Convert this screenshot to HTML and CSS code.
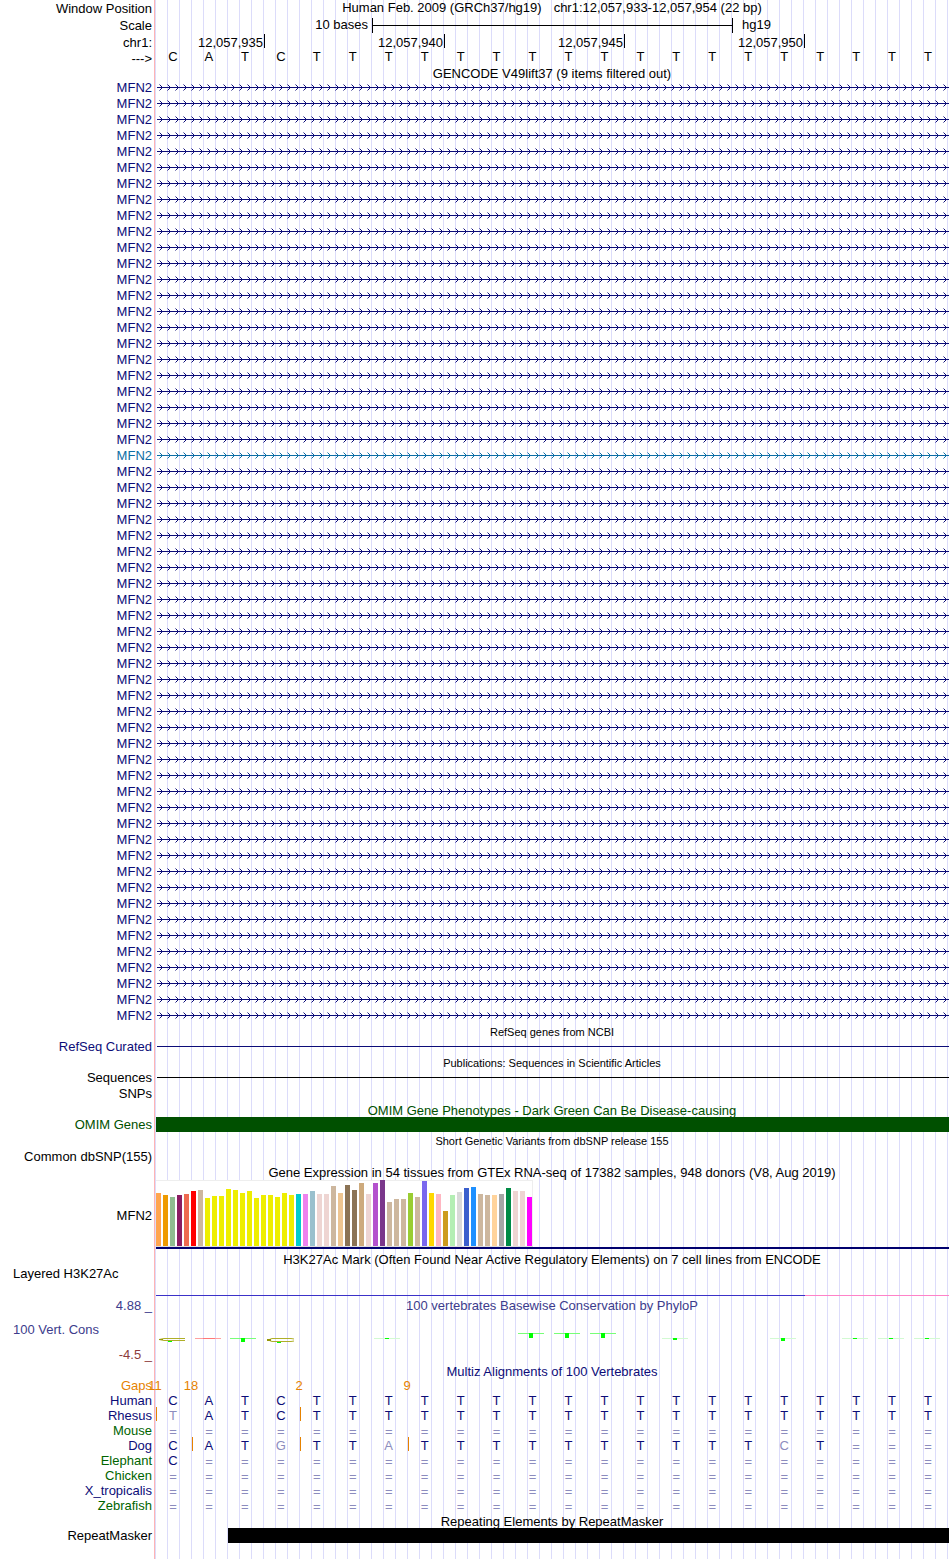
FILE: index.html
```html
<!DOCTYPE html>
<html lang="en">
<head>
    <meta charset="UTF-8">
    <meta name="viewport" content="width=device-width, initial-scale=1.0">
    <title>Human chr1:12,057,933-12,057,954</title>
    <link rel="stylesheet" href="styles.css">
</head>
<body>
    <!-- shared arrow patterns for the gene rows -->
    <svg class="defs" aria-hidden="true">
        <defs>
            <pattern id="arrows" width="8" height="16" patternUnits="userSpaceOnUse">
                <path d="M0 8.5H8M2.5 5.5L5.5 8.5L2.5 11.5" fill="none" stroke="#0c0c78"/>
            </pattern>
            <pattern id="arrows-alt" width="8" height="16" patternUnits="userSpaceOnUse">
                <path d="M0 8.5H8M2.5 5.5L5.5 8.5L2.5 11.5" fill="none" stroke="#0c6ea5"/>
            </pattern>
        </defs>
    </svg>
    <main class="browser">
        <div class="track">
            <div class="label">Window Position</div>
            <div class="position"><span>Human Feb. 2009 (GRCh37/hg19)</span><span>chr1:12,057,933-12,057,954 (22 bp)</span></div>
        </div>
        <div class="track scale-track">
            <div class="label">Scale</div>
            <div class="scale">
                <span class="scale-size">10 bases</span>
                <span class="scale-bar"></span>
                <span class="scale-db">hg19</span>
            </div>
        </div>
        <div class="track">
            <div class="label">chr1:</div>
            <div class="ruler">
                <span class="tick first">12,057,935</span>
                <span class="tick">12,057,940</span>
                <span class="tick">12,057,945</span>
                <span class="tick">12,057,950</span>
            </div>
        </div>
        <div class="track">
            <div class="label">---&gt;</div>
            <div class="bases sequence" data-seq="CATCTTTTTTTTTTTTTTTTTT"></div>
        </div>

        <div class="title gencode">GENCODE V49lift37 (9 items filtered out)</div>
        <div id="genes"></div>

        <div class="title small">RefSeq genes from NCBI</div>
        <div class="track short navy">
            <div class="label">RefSeq Curated</div>
            <div class="line"></div>
        </div>

        <div class="title small">Publications: Sequences in Scientific Articles</div>
        <div class="track short">
            <div class="label">Sequences</div>
            <div class="line"></div>
        </div>
        <div class="track">
            <div class="label">SNPs</div>
        </div>

        <div class="title low green">OMIM Gene Phenotypes - Dark Green Can Be Disease-causing</div>
        <div class="track short green">
            <div class="label">OMIM Genes</div>
            <div class="block"></div>
        </div>

        <div class="title small">Short Genetic Variants from dbSNP release 155</div>
        <div class="track">
            <div class="label">Common dbSNP(155)</div>
        </div>

        <div class="title">Gene Expression in 54 tissues from GTEx RNA-seq of 17382 samples, 948 donors (V8, Aug 2019)</div>
        <div class="track gtex">
            <div class="label">MFN2</div>
            <div class="expression"><div class="bars" id="bars"></div></div>
        </div>

        <div class="title tall">H3K27Ac Mark (Often Found Near Active Regulatory Elements) on 7 cell lines from ENCODE</div>
        <div class="track h3k">
            <div class="label left">Layered H3K27Ac</div>
            <div class="signal"></div>
        </div>

        <div class="track short cons-head">
            <div class="label">4.88 _</div>
            <div class="heading">100 vertebrates Basewise Conservation by PhyloP</div>
        </div>
        <div class="track cons">
            <div class="cons-labels">
                <div class="label left">100 Vert. Cons</div>
                <div class="label minimum">-4.5 _</div>
            </div>
            <svg class="phylop" viewBox="0 0 792 51" preserveAspectRatio="none" role="img" aria-label="PhyloP scores">
                <g fill="none" stroke="#afaf28">
                    <path d="M30 25.5H9L4 26.5L9 27.5H30"/>
                    <path d="M139 26L136 25.5H117L113 27L117 28.5H136L139 28"/>
                </g>
                <path d="M4 26h4v1H4zM112 26h4v2h-4z" fill="#96960a"/>
                <path d="M40 25h26v1H40z" fill="#ffa0a0"/>
                <path d="M48 25h12v1H48z" fill="#ff7878"/>
                <path d="M75 25h26v1H75zM363 20h26v1h-26zM399 20h26v1h-26zM435 20h26v1h-26z" fill="#78ff78"/>
                <path d="M219 25h26v1h-26zM507 25h26v1h-26zM615 25h26v1h-26zM687 25h26v1h-26zM723 25h26v1h-26zM759 25h26v1h-26z" fill="#d2fad2"/>
                <path d="M13 28h4v1h-4zM86 25h4v4h-4zM122 29h4v1h-4zM230 25h4v1h-4zM374 20h4v5h-4zM410 20h4v5h-4zM446 20h4v5h-4zM518 25h4v2h-4zM626 25h4v3h-4zM698 25h4v1h-4zM734 25h4v1h-4zM770 25h4v1h-4z" fill="#00ff00"/>
            </svg>
        </div>

        <div class="title short navy">Multiz Alignments of 100 Vertebrates</div>
        <div class="track short species gaps">
            <div class="label">Gaps</div>
            <div class="bases">
                <span>11</span><span>18</span><span></span><span></span><span>2</span><span></span><span></span><span>9</span>
            </div>
        </div>
        <div id="alignments"></div>

        <div class="title repeat">Repeating Elements by RepeatMasker</div>
        <div class="track short">
            <div class="label">RepeatMasker</div>
            <div class="repeats"><div class="block"></div></div>
        </div>
    </main>

    <script>
        const GENE_ROWS = 59;
        const ALT_ROW = 23;

        // color and height of each tissue, in GTEx order
        const tissues = [
            ["#ffa54f", 53], ["#ee9a00", 51], ["#8fbc8f", 49], ["#8b1c62", 51], ["#ee6a50", 52], ["#ff0000", 55],
            ["#cdb79e", 56], ["#eeee00", 48], ["#eeee00", 50], ["#eeee00", 50], ["#eeee00", 57], ["#eeee00", 56],
            ["#eeee00", 53], ["#eeee00", 55], ["#eeee00", 48], ["#eeee00", 51], ["#eeee00", 51], ["#eeee00", 49],
            ["#eeee00", 53], ["#eeee00", 51], ["#00cdcd", 52], ["#ee82ee", 52], ["#9ac0cd", 55], ["#eed5d2", 52],
            ["#eed5d2", 52], ["#cdb79e", 60], ["#eec591", 53], ["#8b7355", 61], ["#8b7355", 56], ["#cdaa7d", 63],
            ["#eed5d2", 52], ["#b452cd", 63], ["#7a378b", 66], ["#cdb79e", 44], ["#cdb79e", 47], ["#cdb79e", 47],
            ["#9acd32", 53], ["#cdb79e", 49], ["#7a67ee", 65], ["#ffd700", 53], ["#ffb6c1", 52], ["#cd9b1d", 35],
            ["#b4eeb4", 51], ["#d9d9d9", 54], ["#3a5fcd", 58], ["#1e90ff", 59], ["#cdb79e", 52], ["#cdb79e", 51],
            ["#ffd39b", 51], ["#a6a6a6", 52], ["#008b45", 58], ["#eed5d2", 55], ["#eed5d2", 55], ["#ff00ff", 49]
        ];

        // lower case = differs from human, "|" = insertion before the next base
        const species = [
            ["Human", "navy", "CATCTTTTTTTTTTTTTTTTTT"],
            ["Rhesus", "navy", "|tATC|TTTTTTTTTTTTTTTTTT"],
            ["Mouse", "forest", "======================"],
            ["Dog", "navy", "C|ATg|TTa|TTTTTTTTTTcT==="],
            ["Elephant", "forest", "C====================="],
            ["Chicken", "forest", "======================"],
            ["X_tropicalis", "navy", "======================"],
            ["Zebrafish", "forest", "======================"]
        ];

        function baseCells(seq) {
            let html = "";
            let gap = false;
            for (const c of seq) {
                if (c === "|") {
                    gap = true;
                    continue;
                }
                const classes = [];
                if (gap) classes.push("gap");
                if (c === "=") classes.push("unaligned");
                else if (c !== c.toUpperCase()) classes.push("mismatch");
                html += `<span class="${classes.join(" ")}">${c.toUpperCase()}</span>`;
                gap = false;
            }
            return html;
        }

        let genes = "";
        for (let i = 0; i < GENE_ROWS; i++) {
            const alt = i === ALT_ROW;
            genes += `<div class="track ${alt ? "teal" : "navy"}">
                <div class="label">MFN2</div>
                <svg class="gene"><rect width="100%" height="16" fill="url(#${alt ? "arrows-alt" : "arrows"})"/></svg>
            </div>`;
        }
        document.getElementById("genes").innerHTML = genes;

        document.getElementById("bars").innerHTML = tissues
            .map(([color, height]) => `<span style="height: ${height}px; background: ${color}"></span>`)
            .join("");

        document.getElementById("alignments").innerHTML = species
            .map(([name, color, seq]) => `<div class="track short species">
                <div class="label ${color}">${name}</div>
                <div class="bases aligned">${baseCells(seq)}</div>
            </div>`)
            .join("");

        document.querySelectorAll("[data-seq]").forEach(el => {
            el.innerHTML = baseCells(el.dataset.seq);
        });
    </script>
</body>
</html>
```
FILE: styles.css
```css
body {
    margin: 0;
    background: #fff;
    color: #000;
    font-family: "Liberation Sans", Arial, sans-serif;
    font-size: 13px;
    line-height: 16px;
}

.defs {
    position: absolute;
    width: 0;
    height: 0;
}

/* pink divider and light guide lines run behind every track */
.browser {
    margin-right: 1px;
    padding-bottom: 16px;
    background:
        linear-gradient(#ffb4b4, #ffb4b4) 154px 0 / 1px 100% no-repeat,
        linear-gradient(90deg, #fff 155px, transparent 155px),
        repeating-linear-gradient(90deg, transparent 0 11px, #dcdcfa 11px 12px);
}

.track {
    display: grid;
    grid-template-columns: 155px 1fr;
    grid-template-rows: 100%;
    height: 16px;
}

.label {
    padding-right: 3px;
    line-height: 18px;
    text-align: right;
    white-space: nowrap;
}

.label.left {
    padding-left: 13px;
    text-align: left;
}

.short,
.short .label {
    height: 15px;
    line-height: 15px;
}

.title {
    height: 16px;
    margin-left: 155px;
    line-height: 18px;
    text-align: center;
    white-space: nowrap;
}

.title.small {
    font-size: 11px;
}

.title.low {
    line-height: 20px;
}

.title.gencode {
    height: 13px;
    line-height: 15px;
}

.title.tall {
    height: 18px;
    line-height: 22px;
}

.title.short {
    height: 15px;
    line-height: 15px;
}

.title.repeat {
    height: 14px;
    line-height: 16px;
}

.navy {
    color: #0c0c78;
}

.teal {
    color: #0c6ea5;
}

.green {
    color: #005000;
}

.forest {
    color: #006400;
}

/* header rows */
.position {
    display: flex;
    justify-content: center;
    gap: 12px;
    line-height: 15px;
}

.scale-track {
    height: 18px;
    line-height: 18px;
}

.scale-track .label {
    line-height: 20px;
}

.scale,
.ruler,
.bases {
    display: grid;
    grid-template-columns: repeat(22, minmax(0, 1fr));
}

.scale {
    align-items: center;
    margin: 0 1px;
}

.scale-size {
    grid-column: 1 / 7;
    padding-right: 4px;
    text-align: right;
}

.scale-bar {
    grid-column: 7 / 17;
    height: 15px;
    margin-right: -1px;
    border: solid #000;
    border-width: 0 1px;
    background: linear-gradient(#000, #000) 0 7px / 100% 1px no-repeat;
}

.scale-db {
    grid-column: 17 / 23;
    padding-left: 10px;
}

.ruler {
    margin-left: 2px;
}

.tick {
    grid-column: span 5;
    height: 14px;
    padding-right: 1px;
    border-right: 1px solid #000;
    line-height: 18px;
    text-align: right;
}

.tick.first {
    grid-column: span 3;
}

.bases {
    margin-right: 3px;
    text-align: center;
}

.sequence {
    line-height: 14px;
}

/* gene and item lines */
.gene {
    display: block;
    width: calc(100% - 2px);
    height: 16px;
    margin-left: 2px;
}

.line {
    height: 1px;
    margin: 7px 0 0 2px;
    background: currentColor;
}

.block {
    height: 15px;
    margin-left: 1px;
    background: currentColor;
}

.repeats .block {
    margin-left: calc(100% / 11 + 1px);
}

/* GTEx bar chart */
.gtex {
    height: 69px;
}

.gtex .label {
    line-height: 71px;
}

.expression {
    margin-left: 1px;
    border-bottom: 2px solid #00006e;
}

.bars {
    display: flex;
    align-items: flex-end;
    gap: 2px;
    width: max-content;
    height: 66px;
    padding-right: 1px;
    border-bottom: 1px solid #ddd;
    background: #fff;
    box-shadow: inset 0 1px #eee, inset -1px 0 #eee;
}

.bars span {
    width: 5px;
}

/* histone marks */
.h3k {
    height: 31px;
}

.h3k .label {
    line-height: 14px;
}

.signal {
    height: 1px;
    margin: 28px 0 0 1px;
    background: linear-gradient(90deg, #3c32c8 calc(100% * 9 / 11), #ff82c8 0);
}

/* conservation */
.cons-head {
    color: #3c3c8c;
}

.heading {
    text-align: center;
}

.cons {
    height: 51px;
    color: #3c3c8c;
}

.cons .label {
    line-height: 34px;
}

.cons .minimum {
    color: #8c3c3c;
    line-height: 15px;
}

.phylop {
    display: block;
    width: calc(100% - 2px);
    height: 51px;
}

/* multiple alignment */
.species,
.species .label {
    line-height: 13px;
}

.gaps {
    color: #e68200;
}

.gaps .bases {
    margin: 0 20px 0 -18px;
}

.aligned {
    color: #0c0c78;
}

.aligned span {
    position: relative;
}

.aligned .unaligned,
.aligned .mismatch {
    color: #8c8cbe;
}

.unaligned {
    line-height: 15px;
}

.gap::before {
    content: "";
    position: absolute;
    top: -2px;
    left: 1px;
    width: 1px;
    height: 14px;
    background: #e68200;
}
```
